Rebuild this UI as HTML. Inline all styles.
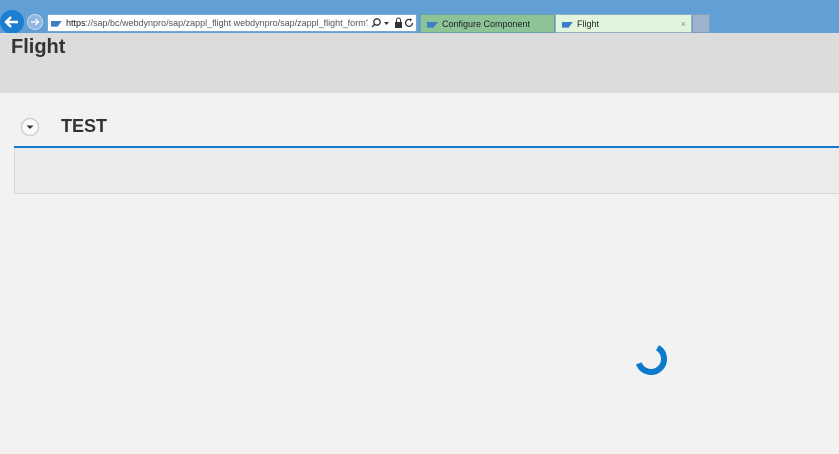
<!DOCTYPE html>
<html><head><meta charset="utf-8"><style>
*{margin:0;padding:0;box-sizing:border-box}
body{width:839px;height:454px;overflow:hidden;background:#f2f2f2;font-family:"Liberation Sans",sans-serif;position:relative}
.bar{position:absolute;left:0;top:0;width:839px;height:33px;background:#629fd4}
.abs{position:absolute}
.url{left:47px;top:14px;width:370px;height:18px;background:#fff;border:1px solid #7aa7cf;font-size:9px;line-height:16px;color:#555;white-space:nowrap;overflow:hidden}
.urlt{position:absolute;left:0;top:0;width:320px;overflow:hidden}
.tab{top:14px;height:19px;font-size:9px;line-height:18px;color:#222;white-space:nowrap}
.sap{display:inline-block;width:11px;height:6px;background:#3b7fc4;vertical-align:middle;margin:0 4px 0 6px;clip-path:polygon(0 0,100% 0,60% 100%,0 100%)}
.hdr{left:0;top:33px;width:839px;height:60px;background:#dcdcdc}
</style></head><body>
<div class="bar"></div>
<svg class="abs" style="left:0;top:9px" width="46" height="26">
<circle cx="12" cy="13" r="12" fill="#1a7fd0"/>
<path d="M18 13H7M11 8l-5 5 5 5" stroke="#fff" stroke-width="2.4" fill="none"/>
<circle cx="35" cy="13" r="7.5" fill="#8db7e0" stroke="#c9dcef"/>
<path d="M31 13h7M35.5 10l3 3-3 3" stroke="#fff" stroke-width="1.3" fill="none"/>
</svg>
<div class="abs url"><div class="urlt"><span class="sap" style="margin-left:3px"></span><b style="color:#111;font-weight:normal">https</b>://sap/bc/webdynpro/sap/zappl_flight webdynpro/sap/zappl_flight_form?SAP-W</div></div>
<svg class="abs" style="left:370px;top:16px" width="46" height="14">
<circle cx="7" cy="6" r="3.2" stroke="#333" fill="none" stroke-width="1.3"/><path d="M5 8l-3 3" stroke="#333" stroke-width="1.4"/>
<path d="M14 6h5l-2.5 3z" fill="#333"/>
<rect x="25" y="6" width="7" height="6" fill="#333"/><path d="M26.5 6V4a2 2 0 014 0v2" stroke="#333" fill="none"/>
<path d="M41 4a3.5 3.5 0 10 1.5 3" stroke="#333" fill="none" stroke-width="1.3"/><path d="M40 2l2 2-2 1.5z" fill="#333"/>
</svg>
<div class="abs tab" style="left:420px;width:135px;background:#8cc497;border:1px solid #6b9fb4"><span class="sap"></span>Configure Component</div>
<div class="abs tab" style="left:555px;width:137px;background:#e0f5dc;border:1px solid #8fb0c8"><span class="sap"></span>Flight<span style="position:absolute;right:5px;color:#888">×</span></div>
<div class="abs" style="left:692px;top:14px;width:18px;height:19px;background:#9bb3cc;border:1px solid #7f9fbf"></div>
<div class="abs hdr"></div>
<div class="abs" style="left:11px;top:36px;font-size:20px;font-weight:bold;color:#333">Flight</div>
<svg class="abs" style="left:20px;top:117px" width="20" height="20"><circle cx="10" cy="10" r="8.5" fill="#fafafa" stroke="#d0d0d0" stroke-width="1.5"/><path d="M6.5 8.5h7L10 12z" fill="#333"/></svg>
<div class="abs" style="left:61px;top:116px;font-size:18px;font-weight:bold;color:#333">TEST</div>
<div class="abs" style="left:14px;top:146px;width:825px;height:2px;background:#137ac9"></div>
<div class="abs" style="left:14px;top:148px;width:825px;height:46px;background:#ebebeb;border:1px solid #d8d8d8;border-top:none;border-right:none"></div>
<svg class="abs" style="left:635px;top:343px" width="32" height="32">
<path d="M22.5 4.7A13 13 0 1 1 3.8 20.4" stroke="#0a7acc" stroke-width="6" fill="none"/>
</svg>
</body></html>
